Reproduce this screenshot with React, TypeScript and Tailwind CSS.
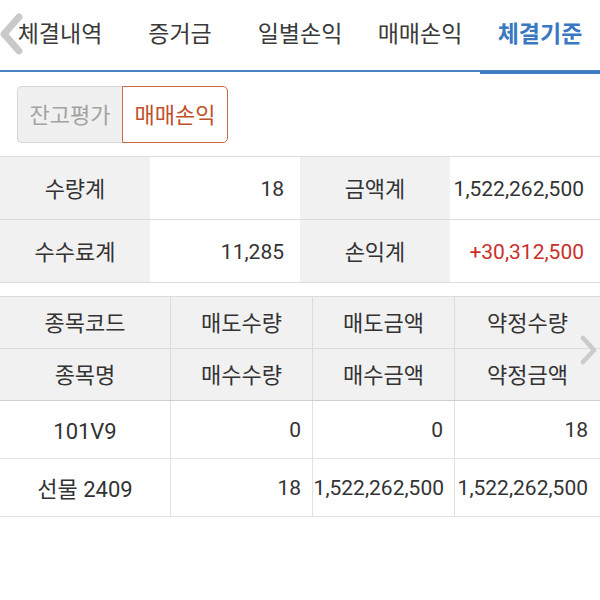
const font = { fontFamily: 'Roboto, "Noto Sans CJK KR", "Noto Sans", sans-serif' };

const tabs = ["체결내역", "증거금", "일별손익", "매매손익", "체결기준"];

function SummaryRow({ a, av, b, bv, red }: { a: string; av: string; b: string; bv: string; red?: boolean }) {
  return (
    <div className="grid grid-cols-4 h-[63px] border-b border-[#dcdcdc] text-[21px] text-[#333]">
      <div className="bg-[#f1f1f1] flex items-center justify-center pt-[3px] text-[22px]">{a}</div>
      <div className="flex items-center justify-end pr-4 pt-[3px]">{av}</div>
      <div className="bg-[#f1f1f1] flex items-center justify-center pt-[3px] text-[22px]">{b}</div>
      <div className={`flex items-center justify-end pr-4 pt-[3px] ${red ? "text-[#c8312b]" : ""}`}>{bv}</div>
    </div>
  );
}

const cols = "grid grid-cols-[171px_142px_142px_145px]";

export default function App() {
  return (
    <div className="w-[600px] h-[600px] bg-white relative overflow-hidden" style={font}>
      {/* tabs */}
      <div className="flex h-[72px] border-b-2 border-[#4a82c4]">
        {tabs.map((t, i) => (
          <div
            key={t}
            className={`w-[120px] flex items-center justify-center text-[23px] ${
              i === 4 ? "text-[#3a78c2] font-bold border-b-[3px] border-[#3f7cc6] mb-[-2px] h-[74px]" : "text-[#3a3a3a]"
            }`}
          >
            {t}
          </div>
        ))}
      </div>
      <svg className="absolute left-0 top-[13px]" width="24" height="42" viewBox="0 0 24 42">
        <polyline points="19,4 4,21 19,38" fill="none" stroke="#c9c9c9" strokeWidth="7" strokeLinecap="round" strokeLinejoin="round" />
      </svg>

      {/* segmented */}
      <div className="px-[17px] pt-[14px] pb-[13px]">
        <div className="flex h-[57px] w-[211px] text-[22px]">
          <div className="w-[105px] flex items-center justify-center pt-[1px] bg-[#f0f0f0] text-[#a3a3a3] border border-r-0 border-[#d6d6d6] rounded-l-[5px]">
            잔고평가
          </div>
          <div className="w-[106px] flex items-center justify-center pt-[1px] bg-white text-[#c0502a] border border-[#c86a45] rounded-r-[5px]">
            매매손익
          </div>
        </div>
      </div>

      {/* summary */}
      <div className="border-t border-[#dcdcdc]">
        <SummaryRow a="수량계" av="18" b="금액계" bv="1,522,262,500" />
        <SummaryRow a="수수료계" av="11,285" b="손익계" bv="+30,312,500" red />
      </div>

      {/* detail table */}
      <div className="mt-[13px] border-t border-[#dcdcdc] text-[21px] text-[#333] relative">
        <div className={`${cols} h-[52px] bg-[#f1f1f1] border-b border-[#dcdcdc] text-[22px]`}>
          {["종목코드", "매도수량", "매도금액", "약정수량"].map((h, i) => (
            <div key={h} className={`flex items-center justify-center pt-[2px] ${i < 3 ? "border-r border-[#dcdcdc]" : ""}`}>{h}</div>
          ))}
        </div>
        <div className={`${cols} h-[52px] bg-[#f1f1f1] border-b border-[#cfcfcf] text-[22px]`}>
          {["종목명", "매수수량", "매수금액", "약정금액"].map((h, i) => (
            <div key={h} className={`flex items-center justify-center pt-[2px] ${i < 3 ? "border-r border-[#dcdcdc]" : ""}`}>{h}</div>
          ))}
        </div>
        <div className={`${cols} h-[58px] border-b border-[#e2e2e2]`}>
          <div className="flex items-center justify-center pt-[3px] border-r border-[#e2e2e2] text-[22px]">101V9</div>
          <div className="flex items-center justify-end pr-[11px] pt-[3px] border-r border-[#e2e2e2]">0</div>
          <div className="flex items-center justify-end pr-[11px] pt-[3px] border-r border-[#e2e2e2]">0</div>
          <div className="flex items-center justify-end pr-[12px] pt-[3px]">18</div>
        </div>
        <div className={`${cols} h-[58px] border-b border-[#e2e2e2]`}>
          <div className="flex items-center justify-center pt-[3px] border-r border-[#e2e2e2] text-[22px]">선물 2409</div>
          <div className="flex items-center justify-end pr-[11px] pt-[3px] border-r border-[#e2e2e2]">18</div>
          <div className="flex items-center justify-end pr-[10px] pt-[3px] border-r border-[#e2e2e2]">1,522,262,500</div>
          <div className="flex items-center justify-end pr-[12px] pt-[3px]">1,522,262,500</div>
        </div>
        <svg className="absolute right-[2px] top-[38px]" width="18" height="30" viewBox="0 0 18 30">
          <polyline points="3,3 14,15 3,27" fill="none" stroke="#cbcbcb" strokeWidth="4.5" strokeLinecap="round" strokeLinejoin="round" />
        </svg>
      </div>
    </div>
  );
}
